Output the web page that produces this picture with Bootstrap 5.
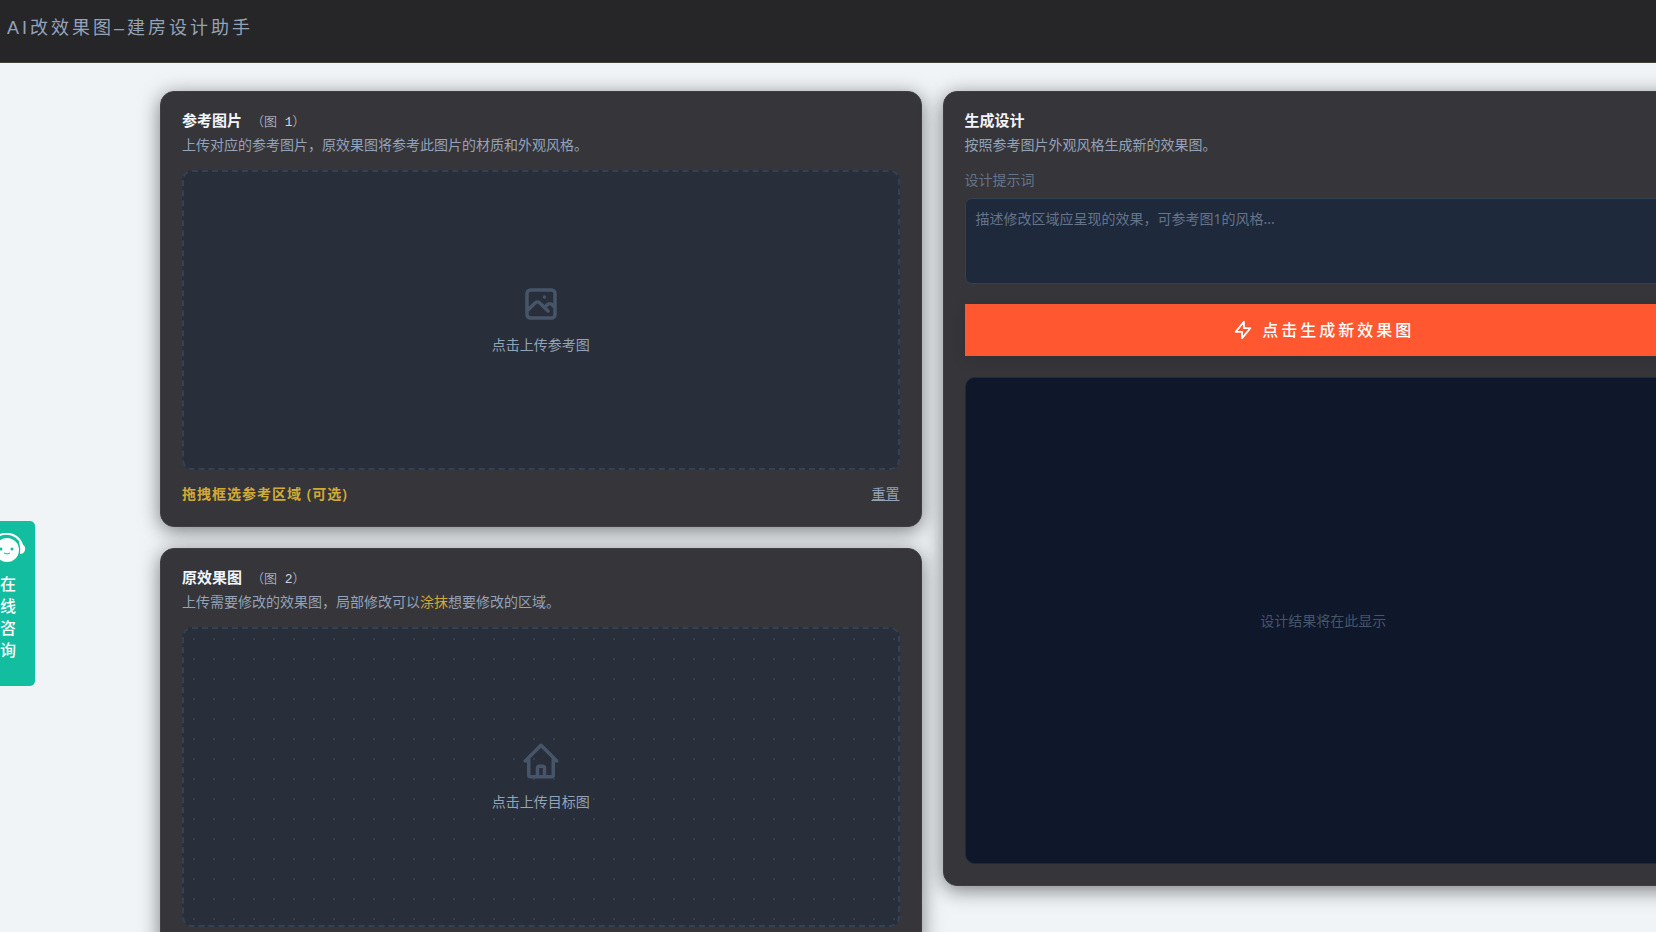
<!DOCTYPE html>
<html lang="zh-CN">
<head>
<meta charset="utf-8">
<meta name="viewport" content="width=device-width, initial-scale=1">
<title>AI改效果图–建房设计助手</title>
<link href="https://cdn.jsdelivr.net/npm/bootstrap@5.3.0/dist/css/bootstrap.min.css" rel="stylesheet">
<style>
  body {
    background: #f0f4f7;
    font-family: "Noto Sans", "Noto Sans CJK SC", sans-serif;
    font-size: 14px;
    line-height: 20px;
    color: #94a3b8;
    overflow-x: hidden;
  }
  .topbar { height: 63px; padding: 0 7px 6px; background: #262628; border-bottom: 1px solid #46423a; }
  .topbar h1 { font-family: "Liberation Sans", "Noto Sans CJK SC", sans-serif; font-size: 18px; font-weight: 400; line-height: 28px; letter-spacing: 3px; }
  .workspace {
    display: grid;
    grid-template-columns: repeat(2, minmax(0, 1fr));
    gap: 21px;
    align-items: start;
    margin: 28px -48px 28px 160px;
  }
  .panel-stack { display: grid; gap: 21px; }
  .tool-panel {
    background: #363539;
    border: 1px solid #403f3e;
    border-radius: 14px;
    padding: 16px 21px 21px;
    box-shadow: 0 4px 20px rgba(0, 0, 0, .5);
  }
  .tool-panel h2 { font-size: 15px; font-weight: 700; line-height: 24px; margin: 0 0 3px; color: #f1f5f9; }
  .tool-panel h2 span { font-family: "Liberation Mono", "Noto Sans CJK SC", monospace; font-size: 13px; font-weight: 300; line-height: 1; color: #cbd5e1; margin-left: 5px; }
  .tool-panel p { margin-bottom: 15px; }
  .upload-zone {
    height: 300px;
    gap: 10px;
    border: 2px dashed #334155;
    border-radius: 10px;
    background-color: #282e3a;
    color: #94a3b8;
    font-size: 14px;
    padding-bottom: 3px;
  }
  .upload-zone svg { color: #475569; }
  .dotted { background-image: radial-gradient(#363f4e 1px, transparent 1px); background-size: 20px 20px; }
  .gold { color: #d1ab35; }
  .region-bar { margin-top: 14px; padding-bottom: 1px; }
  .region-hint { letter-spacing: 1px; font-weight: 600; }
  .btn-reset { font-size: 14px; line-height: 20px; color: #94a3b8; }
  .prompt-label { color: #64748b; }
  .prompt-box, .prompt-box:focus {
    height: 86px;
    padding: 10px;
    font-size: 14px;
    line-height: 20px;
    color: #e2e8f0;
    background: #1e293b;
    border: 1px solid #334155;
    border-radius: 7px;
    resize: none;
  }
  .prompt-box::placeholder { color: #64748b; }
  .btn-generate, .btn-generate:hover {
    height: 52px;
    margin: 20px 0 21px;
    font-size: 16px;
    font-weight: 500;
    letter-spacing: 3px;
    color: #fff;
    background: #ff572f;
    box-shadow: 0 4px 14px rgba(0, 0, 0, .1);
  }
  .result-view {
    height: 487px;
    background: #0f172a;
    border: 1px solid #1e293b;
    border-radius: 10px;
    color: #475569;
  }
  .consult {
    top: 521px;
    width: 35px;
    height: 165px;
    padding: 12px 0 0;
    background: #12bda0;
    border-radius: 0 5px 5px 0;
    color: #fff;
    font-size: 16px;
    font-weight: 500;
    line-height: 22px;
  }
  .consult span { width: 16px; }
</style>
</head>
<body>
<header class="topbar d-flex align-items-center">
  <h1 class="m-0">AI改效果图–建房设计助手</h1>
</header>

<main class="workspace">
  <div class="panel-stack">
    <section class="tool-panel">
      <h2>参考图片 <span>（图 1）</span></h2>
      <p>上传对应的参考图片，原效果图将参考此图片的材质和外观风格。</p>
      <button type="button" class="upload-zone w-100 d-flex flex-column align-items-center justify-content-center">
        <svg width="42" height="42" viewBox="0 0 24 24" fill="none" stroke="currentColor" stroke-width="2" stroke-linecap="round" stroke-linejoin="round" aria-hidden="true"><path d="m4 16 4.586-4.586a2 2 0 0 1 2.828 0L16 16m-2-2 1.586-1.586a2 2 0 0 1 2.828 0L20 14m-6-6h.01M6 20h12a2 2 0 0 0 2-2V6a2 2 0 0 0-2-2H6a2 2 0 0 0-2 2v12a2 2 0 0 0 2 2z"/></svg>
        <span>点击上传参考图</span>
      </button>
      <div class="region-bar d-flex justify-content-between">
        <span class="gold region-hint">拖拽框选参考区域 (可选)</span>
        <button type="button" class="btn btn-link btn-reset border-0 p-0">重置</button>
      </div>
    </section>

    <section class="tool-panel">
      <h2>原效果图 <span>（图 2）</span></h2>
      <p>上传需要修改的效果图，局部修改可以<span class="gold">涂抹</span>想要修改的区域。</p>
      <button type="button" class="upload-zone dotted w-100 d-flex flex-column align-items-center justify-content-center">
        <svg width="42" height="42" viewBox="0 0 24 24" fill="none" stroke="currentColor" stroke-width="2" stroke-linecap="round" stroke-linejoin="round" aria-hidden="true"><path d="m3 12 2-2m0 0 7-7 7 7M5 10v10a1 1 0 0 0 1 1h3m10-11 2 2m-2-2v10a1 1 0 0 1-1 1h-3m-6 0a1 1 0 0 0 1-1v-4a1 1 0 0 1 1-1h2a1 1 0 0 1 1 1v4a1 1 0 0 0 1 1m-6 0h6"/></svg>
        <span>点击上传目标图</span>
      </button>
    </section>
  </div>

  <section class="tool-panel">
    <h2>生成设计</h2>
    <p>按照参考图片外观风格生成新的效果图。</p>
    <label for="prompt" class="prompt-label d-block mb-2">设计提示词</label>
    <textarea id="prompt" class="prompt-box form-control" placeholder="描述修改区域应呈现的效果，可参考图1的风格..."></textarea>
    <button type="button" class="btn btn-generate w-100 rounded-0 border-0 d-flex align-items-center justify-content-center gap-2">
      <svg width="22" height="22" viewBox="0 0 24 24" fill="none" stroke="currentColor" stroke-width="2" stroke-linecap="round" stroke-linejoin="round" aria-hidden="true"><path d="M13 10V3L4 14h7v7l9-11h-7z"/></svg>
      <span>点击生成新效果图</span>
    </button>
    <div class="result-view d-flex align-items-center justify-content-center">设计结果将在此显示</div>
  </section>
</main>

<a href="#" class="consult position-fixed start-0 text-decoration-none d-flex flex-column" aria-label="在线咨询">
  <svg class="mb-2" width="28" height="32" viewBox="0 0 28 32" aria-hidden="true">
    <circle cx="7" cy="17" r="12" fill="#fff"/>
    <path d="M-9 12A16 15 0 0 1 22 12" fill="none" stroke="#fff" stroke-width="2"/>
    <path d="M19 9q2 0 3 2q4 2 3 6q-1 4-5 4q1-6-1-12z" fill="#fff"/>
    <circle cx="1" cy="16" r="1.5" fill="#12bda0"/><circle cx="12" cy="16" r="1.5" fill="#12bda0"/>
    <path d="M4 20q3 2 6 0" fill="none" stroke="#12bda0" stroke-width="1"/>
  </svg>
  <span>在线咨询</span>
</a>
<script src="https://cdn.jsdelivr.net/npm/bootstrap@5.3.0/dist/js/bootstrap.bundle.min.js"></script>
</body>
</html>
